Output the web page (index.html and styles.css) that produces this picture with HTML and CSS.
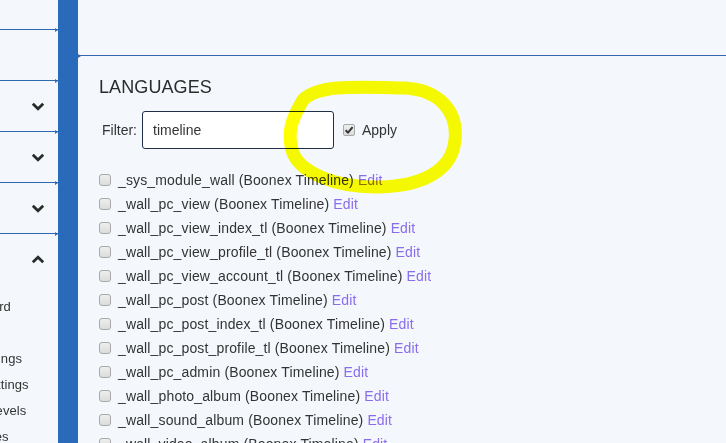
FILE: index.html
```html
<!DOCTYPE html>
<html lang="en">
<head>
<meta charset="utf-8">
<title>Languages</title>
<link rel="stylesheet" href="styles.css">
</head>
<body>
<div class="app">
  <aside class="sidebar">
    <nav class="nav">
      <div class="sec sec-first"><span class="sec-label">Menu</span></div>
      <div class="sec"><span class="sec-label">Dashboard</span></div>
      <div class="sec"><span class="sec-label">Extensions</span>
        <svg class="chev" width="14" height="9" viewBox="0 0 14 9"><polyline points="1.8,1.8 7,6.8 12.2,1.8"/></svg></div>
      <div class="sec"><span class="sec-label">Users</span>
        <svg class="chev" width="14" height="9" viewBox="0 0 14 9"><polyline points="1.8,1.8 7,6.8 12.2,1.8"/></svg></div>
      <div class="sec"><span class="sec-label">Builders</span>
        <svg class="chev" width="14" height="9" viewBox="0 0 14 9"><polyline points="1.8,1.8 7,6.8 12.2,1.8"/></svg></div>
      <div class="sec sec-open"><span class="sec-label">Settings</span>
        <svg class="chev" width="14" height="9" viewBox="0 0 14 9"><polyline points="1.8,7.2 7,2.2 12.2,7.2"/></svg></div>
      <ul class="sub">
        <li>Admin Password</li>
        <li>Basic Settings</li>
        <li>Advanced Settings</li>
        <li>Languages Settings</li>
        <li>Membership Levels</li>
        <li>Email Templates</li>
      </ul>
    </nav>
  </aside>
  <div class="rail"></div>
  <main class="main">
    <div class="topbar"></div>
    <section class="content">
      <h2 class="title">LANGUAGES</h2>
      <div class="filter">
        <label class="filter-label">Filter:</label>
        <input class="filter-input" type="text" value="timeline">
        <span class="cb cb-checked"><svg width="10" height="10" viewBox="0 0 10 10"><path d="M1.6 5.2 L4 7.6 L8.6 2.2" /></svg></span>
        <span class="apply">Apply</span>
      </div>
      <ul class="keys">
        <li><span class="cb"></span><span class="key">_sys_module_wall (Boonex Timeline)</span> <a class="edit">Edit</a></li>
        <li><span class="cb"></span><span class="key">_wall_pc_view (Boonex Timeline)</span> <a class="edit">Edit</a></li>
        <li><span class="cb"></span><span class="key">_wall_pc_view_index_tl (Boonex Timeline)</span> <a class="edit">Edit</a></li>
        <li><span class="cb"></span><span class="key">_wall_pc_view_profile_tl (Boonex Timeline)</span> <a class="edit">Edit</a></li>
        <li><span class="cb"></span><span class="key">_wall_pc_view_account_tl (Boonex Timeline)</span> <a class="edit">Edit</a></li>
        <li><span class="cb"></span><span class="key">_wall_pc_post (Boonex Timeline)</span> <a class="edit">Edit</a></li>
        <li><span class="cb"></span><span class="key">_wall_pc_post_index_tl (Boonex Timeline)</span> <a class="edit">Edit</a></li>
        <li><span class="cb"></span><span class="key">_wall_pc_post_profile_tl (Boonex Timeline)</span> <a class="edit">Edit</a></li>
        <li><span class="cb"></span><span class="key">_wall_pc_admin (Boonex Timeline)</span> <a class="edit">Edit</a></li>
        <li><span class="cb"></span><span class="key">_wall_photo_album (Boonex Timeline)</span> <a class="edit">Edit</a></li>
        <li><span class="cb"></span><span class="key">_wall_sound_album (Boonex Timeline)</span> <a class="edit">Edit</a></li>
        <li><span class="cb"></span><span class="key">_wall_video_album (Boonex Timeline)</span> <a class="edit">Edit</a></li>
        <li><span class="cb"></span><span class="key">_wall_music_album (Boonex Timeline)</span> <a class="edit">Edit</a></li>
      </ul>
    </section>
  </main>
</div>
<svg class="annot" width="726" height="443" viewBox="0 0 726 443">
  <path d="M303 100 C318 84 360 87 405 88 C440 90 458 112 455 140 C452 172 420 186 380 187 C335 188 298 172 292 150 C287 132 292 118 303 100 Z"/>
</svg>
</body>
</html>
```

FILE: styles.css
```css
html, body {
  margin: 0;
  height: 100%;
}

body {
  background: #f4f8fc;
  font-family: "Liberation Sans", Arial, sans-serif;
  color: #333;
  overflow: hidden;
}

.app {
  display: flex;
  height: 443px;
}

/* ---------- sidebar ---------- */
.sidebar {
  width: 58px;
  flex: 0 0 58px;
  overflow: hidden;
  display: flex;
  justify-content: flex-end;
}

.nav {
  flex: 0 0 146px;
  width: 146px;
}

.sec {
  position: relative;
  height: 50px;
  border-bottom: 1px solid #2f69b2;
  display: flex;
  align-items: center;
  justify-content: space-between;
  padding-right: 13px;
  font-size: 13px;
}

.sec::after {
  content: "";
  position: absolute;
  right: 0;
  bottom: -3px;
  border-top: 2.5px solid transparent;
  border-bottom: 2.5px solid transparent;
  border-left: 3px solid #2f69b2;
}

.sec-first {
  height: 29px;
}

.sec-open {
  border-bottom: none;
}

.sec-open::after {
  display: none;
}

.sec-label {
  white-space: nowrap;
}

.chev {
  display: block;
  fill: none;
  stroke: #2b2b2b;
  stroke-width: 2.8;
  stroke-linecap: butt;
  stroke-linejoin: miter;
}

.sub {
  list-style: none;
  margin: 0;
  padding: 10px 0 0 0;
  font-size: 13px;
  line-height: 26px;
  color: #333;
  letter-spacing: 0.1px;
}

.sub li {
  white-space: nowrap;
}

/* ---------- rail ---------- */
.rail {
  flex: 0 0 20px;
  background: #2a6aba;
}

/* ---------- main ---------- */
.main {
  flex: 1;
  min-width: 0;
}

.topbar {
  position: relative;
  height: 55px;
  border-bottom: 1px solid #3568b0;
}

.topbar::before {
  content: "";
  position: absolute;
  left: 0;
  bottom: -3px;
  border-top: 2.5px solid transparent;
  border-bottom: 2.5px solid transparent;
  border-left: 3px solid #3568b0;
}

.content {
  padding: 21px 0 0 21px;
}

.title {
  margin: 0;
  font-size: 18px;
  line-height: 20px;
  font-weight: normal;
  color: #2b2b2b;
  letter-spacing: 0.1px;
}

.filter {
  display: flex;
  align-items: center;
  margin-top: 14px;
  font-size: 14px;
}

.filter-label {
  margin-left: 3px;
  margin-right: 5px;
}

.filter-input {
  box-sizing: border-box;
  width: 192px;
  height: 38px;
  border: 1px solid #1e2f45;
  border-radius: 3px;
  padding: 0 10px;
  font-family: "Liberation Sans", Arial, sans-serif;
  font-size: 14px;
  color: #333;
  background: #fff;
  outline: none;
}

.cb {
  box-sizing: border-box;
  display: inline-flex;
  align-items: center;
  justify-content: center;
  width: 12px;
  height: 12px;
  border: 1px solid #a9a9a9;
  border-radius: 2px;
  background: linear-gradient(#eeeeee, #dcdcdc);
  flex: 0 0 12px;
}

.cb svg {
  display: block;
  fill: none;
  stroke: #333;
  stroke-width: 2;
}

.cb-checked {
  margin-left: 9px;
}

.apply {
  margin-left: 7px;
}

.keys {
  list-style: none;
  margin: 19px 0 0 0;
  padding: 0;
  font-size: 14px;
  line-height: 24px;
  letter-spacing: 0.14px;
}

.keys li {
  display: flex;
  align-items: center;
  white-space: nowrap;
}

.keys .cb {
  width: 12px;
  height: 12px;
  flex-basis: 12px;
  margin-right: 7px;
  border-radius: 3px;
}

.key {
  margin-right: 4px;
}

.edit {
  color: #8a6cef;
  text-decoration: none;
}

/* ---------- annotation ---------- */
.annot {
  position: absolute;
  left: 0;
  top: 0;
  pointer-events: none;
  mix-blend-mode: multiply;
}

.annot path {
  fill: none;
  stroke: #ffff00;
  stroke-width: 13;
  stroke-linejoin: round;
}
```
